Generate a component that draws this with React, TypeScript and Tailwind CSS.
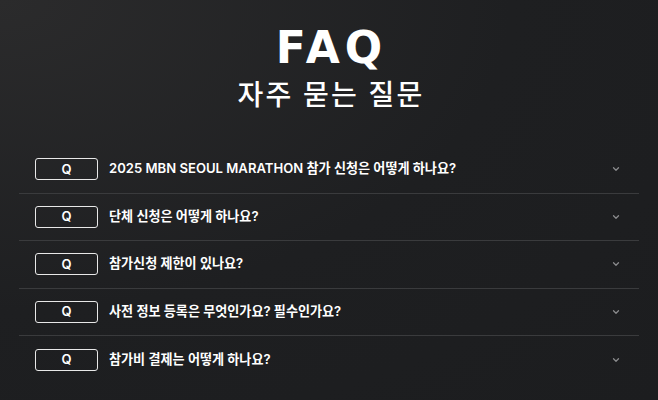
import { ChevronDown } from 'lucide-react'

const questions = [
  '2025 MBN SEOUL MARATHON 참가 신청은 어떻게 하나요?',
  '단체 신청은 어떻게 하나요?',
  '참가신청 제한이 있나요?',
  '사전 정보 등록은 무엇인가요? 필수인가요?',
  '참가비 결제는 어떻게 하나요?',
]

export default function App() {
  return (
    <main
      className="min-h-[400px] w-full bg-[radial-gradient(ellipse_at_top_left,#2b2b2c_0%,#1e1f21_55%,#1c1d1f_100%)] text-white"
      style={{ fontFamily: 'Inter, "Noto Sans CJK KR", sans-serif' }}
    >
      <header className="flex flex-col items-center pt-[24px]">
        <h1
          className="pl-[5px] text-[44px] font-bold leading-[48px] tracking-[5px]"
          style={{ fontFamily: '"DejaVu Sans", sans-serif' }}
        >
          FAQ
        </h1>
        <h2 className="mt-[6px] pl-[4px] text-[28px] font-medium leading-[34px] tracking-[2.2px]">
          자주 묻는 질문
        </h2>
      </header>

      <ul className="mx-[19px] mt-[34px]">
        {questions.map((question, index) => (
          <li
            key={`faq-${index}`}
            className={`flex h-[47.5px] items-center pl-4 pr-[18px] ${
              index < questions.length - 1 ? 'border-b border-[#3a3b3d]' : ''
            }`}
          >
            <span className="flex h-[22px] w-[63px] shrink-0 items-center justify-center rounded-[3px] border-[1.5px] border-[#e8e8e8] text-[13px] font-semibold">
              Q
            </span>
            <p className="ml-[11px] flex-1 text-[13.1px] font-semibold">{question}</p>
            <ChevronDown className="h-[10px] w-[10px] text-[#8a8b8d]" strokeWidth={3} />
          </li>
        ))}
      </ul>
    </main>
  )
}
